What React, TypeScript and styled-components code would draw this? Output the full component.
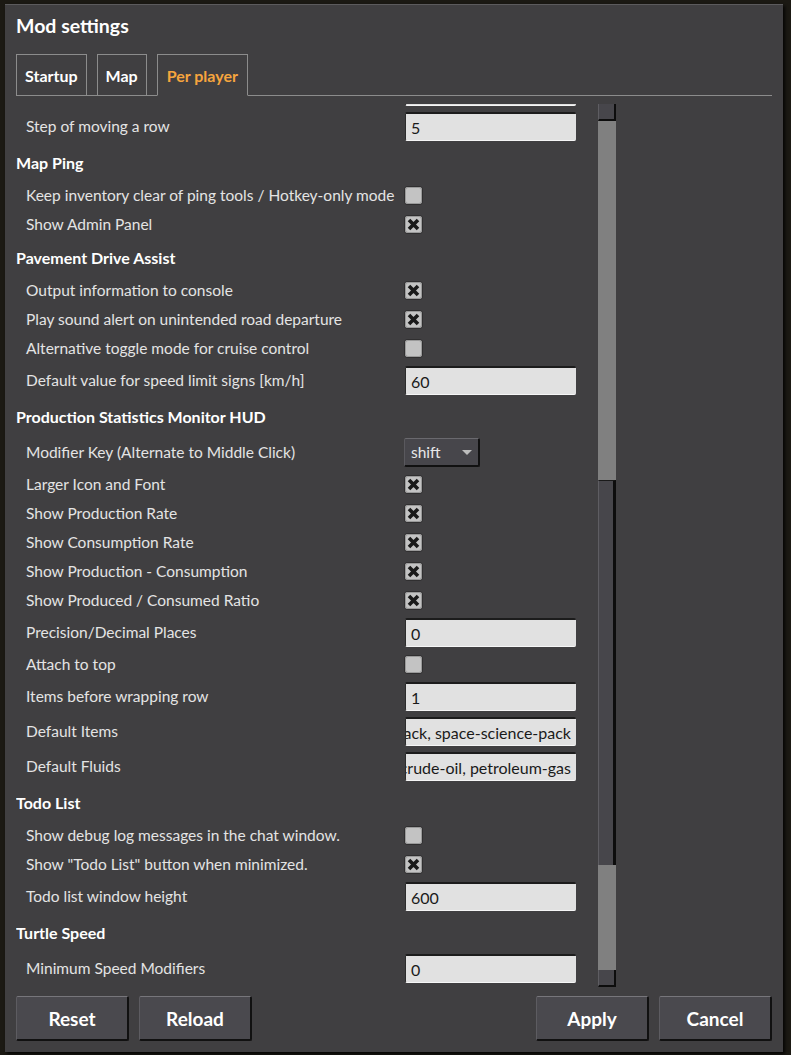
import React from 'react';
import styled, { createGlobalStyle } from 'styled-components';

type Setting =
  | { kind: 'header'; label: string }
  | { kind: 'check'; label: string; checked: boolean }
  | { kind: 'text'; label: string; value: string }
  | { kind: 'drop'; label: string; value: string };

const settings: Setting[] = [
  { kind: 'text', label: 'Number of rows', value: '3' },
  { kind: 'text', label: 'Step of moving a row', value: '5' },
  { kind: 'header', label: 'Map Ping' },
  { kind: 'check', label: 'Keep inventory clear of ping tools / Hotkey-only mode', checked: false },
  { kind: 'check', label: 'Show Admin Panel', checked: true },
  { kind: 'header', label: 'Pavement Drive Assist' },
  { kind: 'check', label: 'Output information to console', checked: true },
  { kind: 'check', label: 'Play sound alert on unintended road departure', checked: true },
  { kind: 'check', label: 'Alternative toggle mode for cruise control', checked: false },
  { kind: 'text', label: 'Default value for speed limit signs [km/h]', value: '60' },
  { kind: 'header', label: 'Production Statistics Monitor HUD' },
  { kind: 'drop', label: 'Modifier Key (Alternate to Middle Click)', value: 'shift' },
  { kind: 'check', label: 'Larger Icon and Font', checked: true },
  { kind: 'check', label: 'Show Production Rate', checked: true },
  { kind: 'check', label: 'Show Consumption Rate', checked: true },
  { kind: 'check', label: 'Show Production - Consumption', checked: true },
  { kind: 'check', label: 'Show Produced / Consumed Ratio', checked: true },
  { kind: 'text', label: 'Precision/Decimal Places', value: '0' },
  { kind: 'check', label: 'Attach to top', checked: false },
  { kind: 'text', label: 'Items before wrapping row', value: '1' },
  {
    kind: 'text',
    label: 'Default Items',
    value:
      'automation-science-pack, logistic-science-pack, chemical-science-pack, utility-science-pack, space-science-pack',
  },
  { kind: 'text', label: 'Default Fluids', value: 'water, crude-oil, petroleum-gas' },
  { kind: 'header', label: 'Todo List' },
  { kind: 'check', label: 'Show debug log messages in the chat window.', checked: false },
  { kind: 'check', label: 'Show "Todo List" button when minimized.', checked: true },
  { kind: 'text', label: 'Todo list window height', value: '600' },
  { kind: 'header', label: 'Turtle Speed' },
  { kind: 'text', label: 'Minimum Speed Modifiers', value: '0' },
  { kind: 'text', label: 'Maximum Speed Modifiers', value: '3' },
];

const tabs = ['Startup', 'Map', 'Per player'];

const CheckMark = () => (
  <svg width="17" height="17" viewBox="0 0 17 17">
    <path d="M4 4 L13 13 M13 4 L4 13" stroke="#1a1a1a" strokeWidth="3.6" strokeLinecap="butt" fill="none" />
  </svg>
);

const renderControl = (s: Setting) => {
  if (s.kind === 'check') return <Checkbox>{s.checked && <CheckMark />}</Checkbox>;
  if (s.kind === 'text')
    return (
      <TextField $scrolled={s.value.length > 20}>
        <span>{s.value}</span>
      </TextField>
    );
  if (s.kind === 'drop')
    return (
      <Dropdown>
        {s.value}
        <Caret />
      </Dropdown>
    );
  return null;
};

const App = () => {
  return (
    <>
      <GlobalStyle />
      <Page>
        <Window>
          <Title>Mod settings</Title>
          <TabBar>
            {tabs.map((t, i) => (
              <Tab key={t} $active={i === 2}>{t}</Tab>
            ))}
          </TabBar>
          <Body>
            <Viewport>
              <List>
                {settings.map((s, i) =>
                  s.kind === 'header' ? (
                    <SectionHeader key={i}>{s.label}</SectionHeader>
                  ) : (
                    <Row key={i} $tall={s.kind !== 'check'}>
                      <Label>{s.label}</Label>
                      {renderControl(s)}
                    </Row>
                  )
                )}
              </List>
            </Viewport>
            <Scrollbar>
              <ScrollCap />
              <Track style={{ height: 359 }} />
              <Thumb style={{ height: 385 }} />
              <Track style={{ height: 105 }} />
              <ScrollCap />
            </Scrollbar>
          </Body>
          <Footer>
            <ButtonGroup>
              <Button>Reset</Button>
              <Button>Reload</Button>
            </ButtonGroup>
            <ButtonGroup>
              <Button>Apply</Button>
              <Button>Cancel</Button>
            </ButtonGroup>
          </Footer>
        </Window>
      </Page>
    </>
  );
};

export default App;


const GlobalStyle = createGlobalStyle`
  html, body {
    margin: 0;
    background: #1b1913;
  }
  body {
    font-family: Lato, "Noto Sans", sans-serif;
    -webkit-font-smoothing: antialiased;
  }
`;

const Page = styled.div`
  width: 791px;
  height: 1055px;
  padding: 4px 8px 0 5px;
  box-sizing: border-box;
  overflow: hidden;
`;

const Window = styled.div`
  width: 778px;
  height: 1048px;
  box-sizing: border-box;
  padding: 9px 11px 11px 11px;
  background: #403f41;
  border-top: 1px solid #5c5b5d;
  box-shadow: 2px 2px 3px rgba(0,0,0,0.8);
  display: flex;
  flex-direction: column;
`;

const Title = styled.div`
  height: 24px;
  line-height: 24px;
  font-size: 19.5px;
  font-weight: bold;
  color: #ffffff;
`;

const TabBar = styled.div`
  margin-top: 16px;
  display: flex;
  gap: 10px;
  border-bottom: 1px solid #8c8c8c;
`;

const Tab = styled.div<{ $active: boolean }>`
  height: 40px;
  margin-bottom: -1px;
  padding: 0 ${p => (p.$active ? 9 : 8)}px;
  display: flex;
  align-items: center;
  border: 1px solid #8c8c8c;
  border-bottom-color: ${p => (p.$active ? '#403f41' : '#8c8c8c')};
  font-size: 16px;
  font-weight: bold;
  color: ${p => (p.$active ? '#f6a53e' : '#ffffff')};
`;

const Body = styled.div`
  margin-top: 8px;
  height: 883px;
  display: flex;
`;

const Viewport = styled.div`
  width: 560px;
  height: 883px;
  overflow: hidden;
`;

const List = styled.div`
  margin-top: -30px;
  display: flex;
  flex-direction: column;
`;

const SectionHeader = styled.div`
  height: 37px;
  padding-bottom: 1px;
  box-sizing: border-box;
  display: flex;
  align-items: center;
  font-size: 16px;
  font-weight: bold;
  color: #ffffff;
`;

const Row = styled.div<{ $tall: boolean }>`
  height: ${p => (p.$tall ? 35 : 29)}px;
  display: flex;
  align-items: center;
  padding-left: 10px;
`;

const Label = styled.div`
  width: 379px;
  flex: none;
  padding-bottom: 2px;
  font-size: 15.5px;
  color: #e4e4e4;
  white-space: nowrap;
`;

const Checkbox = styled.div`
  width: 17px;
  height: 17px;
  box-sizing: border-box;
  border-radius: 3px;
  background: #c3c3c3;
  box-shadow: inset 0 0 0 1px #9a9a9a, 0 0 0 1px rgba(0,0,0,0.25);
  display: flex;
`;

const TextField = styled.div<{ $scrolled: boolean }>`
  width: 171px;
  height: 29px;
  box-sizing: border-box;
  padding: 0 5px;
  background: #e1e1e1;
  border-radius: 2px;
  border-top: 2px solid #1c1c1c;
  border-left: 1px solid #2c2c2c;
  border-bottom: 1px solid #f6f6f6;
  display: flex;
  align-items: center;
  justify-content: ${p => (p.$scrolled ? 'flex-end' : 'flex-start')};
  overflow: hidden;
  font-size: 16px;
  color: #1a1a1a;
  white-space: nowrap;
  & > span {
    flex: none;
  }
`;

const Dropdown = styled.div`
  position: relative;
  width: 76px;
  height: 29px;
  margin-left: -1px;
  box-sizing: border-box;
  padding-left: 6px;
  background: #47464b;
  border-top: 1px solid #6a696e;
  border-left: 1px solid #5a595e;
  border-right: 2px solid #111;
  border-bottom: 2px solid #111;
  border-radius: 2px;
  display: flex;
  align-items: center;
  font-size: 15.5px;
  color: #e8e8e8;
`;

const Caret = styled.span`
  position: absolute;
  right: 6px;
  top: 11px;
  width: 0;
  height: 0;
  border-left: 5px solid transparent;
  border-right: 5px solid transparent;
  border-top: 5px solid #bdbdbd;
`;

const Scrollbar = styled.div`
  margin-left: 22px;
  width: 18px;
  display: flex;
  flex-direction: column;
`;

const Track = styled.div`
  background: #808080;
`;

const ScrollCap = styled.div`
  height: 17px;
  box-sizing: border-box;
  background: #47464b;
  border-right: 2px solid #0d0d0d;
  border-bottom: 2px solid #0d0d0d;
  border-left: 1px solid #5e5d62;
`;

const Thumb = styled.div`
  box-sizing: border-box;
  background: #47464b;
  border-right: 3px solid #0d0d0d;
  border-left: 1px solid #5e5d62;
  border-top: 1px solid #1a1a1a;
`;

const Footer = styled.div`
  margin-top: 9px;
  display: flex;
  justify-content: space-between;
`;

const ButtonGroup = styled.div`
  display: flex;
  gap: 10px;
`;

const Button = styled.button`
  width: 113px;
  height: 45px;
  box-sizing: border-box;
  padding-top: 2px;
  background: #4a494e;
  border: none;
  border-top: 1px solid #77767b;
  border-left: 1px solid #5d5c61;
  border-right: 2px solid #111;
  border-bottom: 2px solid #111;
  border-radius: 2px;
  font-family: Lato, "Noto Sans", sans-serif;
  font-size: 19px;
  font-weight: bold;
  color: #ffffff;
  cursor: pointer;
`;
